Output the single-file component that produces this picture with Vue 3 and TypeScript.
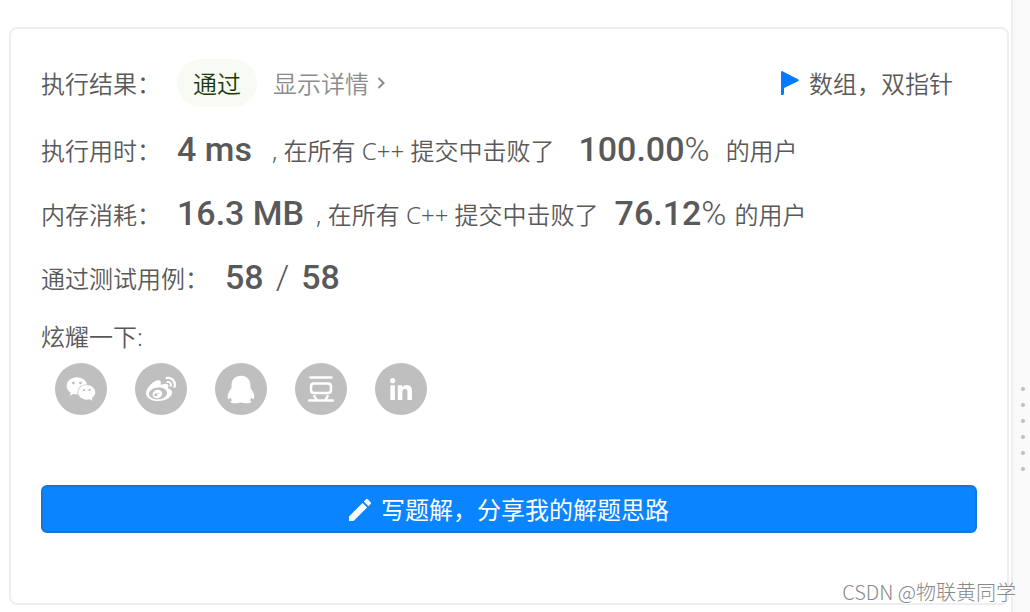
<script setup lang="ts">
interface Metric {
  label: string
  value: string
  percent: string
  spacing: 'loose' | 'tight'
}

interface Share {
  name: string
  viewBox: string
  path: string
  stroke?: boolean
  size: string
}

const metrics: Metric[] = [
  { label: '执行用时：', value: '4 ms', percent: '100.00', spacing: 'loose' },
  { label: '内存消耗：', value: '16.3 MB', percent: '76.12', spacing: 'tight' },
]

const shares: Share[] = [
  {
    name: '微信',
    viewBox: '0 0 576 512',
    size: 'mid',
    path: 'M385.2 167.6c6.4 0 12.6.3 18.8 1.1C387.4 90.3 303.3 32 207.7 32 100.5 32 13 104.8 13 197.4c0 53.4 29.3 97.5 77.9 131.6l-19.3 58.6 68-34.1c24.4 4.8 43.8 9.7 68.2 9.7 6.2 0 12.1-.3 18.3-.8-4-12.9-6.2-26.6-6.2-40.8-.1-84.9 72.9-154 165.3-154zm-104.5-52.9c14.5 0 24.2 9.7 24.2 24.4 0 14.5-9.7 24.2-24.2 24.2-14.8 0-29.3-9.7-29.3-24.2.1-14.7 14.6-24.4 29.3-24.4zm-136.4 48.6c-14.5 0-29.3-9.7-29.3-24.2 0-14.8 14.8-24.4 29.3-24.4 14.8 0 24.4 9.7 24.4 24.4 0 14.6-9.6 24.2-24.4 24.2zM563 319.4c0-77.9-77.9-141.3-165.4-141.3-92.7 0-165.4 63.4-165.4 141.3S305 460.7 397.6 460.7c19.3 0 38.9-5.1 58.6-9.9l53.4 29.3-14.8-48.6C534 402.1 563 363.2 563 319.4zm-219.1-24.5c-9.7 0-19.3-9.7-19.3-19.6 0-9.7 9.7-19.3 19.3-19.3 14.8 0 24.4 9.7 24.4 19.3 0 10-9.7 19.6-24.4 19.6zm107.1 0c-9.7 0-19.3-9.7-19.3-19.6 0-9.7 9.7-19.3 19.3-19.3 14.8 0 24.4 9.7 24.4 19.3.1 10-9.5 19.6-24.4 19.6z',
  },
  {
    name: '微博',
    viewBox: '0 -16 512 512',
    size: 'mid',
    path: 'M407 177.6c7.6-24-13.4-46.8-37.4-41.7-22 4.8-28.8-28.1-7.1-32.8 50.1-10.9 92.3 37.1 76.5 84.8-6.8 21.2-38.8 10.8-32-10.3zM214.8 446.7C108.5 446.7 0 395.3 0 310.4c0-44.3 28-95.4 76.3-143.7C176 67 279.5 65.8 249.9 161c-4 13.1 12.3 5.7 12.3 6 79.5-33.6 140.5-16.8 114 51.4-3.7 9.4 1.1 10.9 8.3 13.1 135.7 42.3 34.8 215.2-169.7 215.2zm143.7-146.3c-5.4-55.7-78.5-94-163.4-85.7-84.8 8.6-148.8 60.3-143.4 116s78.5 94 163.4 85.7c84.8-8.6 148.8-60.3 143.4-116zM347.9 35.1c-25.9 5.6-16.8 43.7 8.3 38.3 72.3-15.2 134.8 52.8 111.7 124-7.4 24.2 29.1 37 37.4 12 31.9-99.8-55.1-195.9-157.4-174.3zm-78.5 311c-17.1 38.8-66.8 60-109.1 46.3-40.8-13.1-58-53.4-40.3-89.7 17.7-35.4 63.1-55.4 103.4-45.1 42 10.8 63.1 50.2 46 88.5zm-86.3-30c-12.9-5.4-30 .3-38 12.9-8.3 12.9-4.3 28 8.6 34 13.1 6 30.8.3 39.1-12.9 8-13.1 3.7-28.3-9.7-34zm32.6-13.4c-5.1-1.7-11.4.6-14.3 5.4-2.9 5.1-1.4 10.6 3.7 12.9 5.1 2 11.7-.3 14.6-5.4 2.8-5.2 1.1-10.9-4-12.9z',
  },
  {
    name: 'QQ',
    viewBox: '0 0 52 52',
    size: 'full',
    path: 'M26 12.700c-5.700 0-9.500 4-9.500 9.300v3c-2.300 3-3.800 5.700-3.800 9 0 2 .9 2.600 1.900 1.400l1-1c.4 1.300 1 2.300 1.700 3.100-1.200.4-1.700.8-1.700 1.400 0 1.500 7.400 1.600 10.400.5 3 1.100 10.400 1 10.400-.5 0-.6-.5-1-1.700-1.400.7-.8 1.300-1.800 1.700-3.100l1 1c1 1.200 1.900.6 1.900-1.400 0-3.300-1.500-6-3.800-9v-3c0-5.300-3.800-9.300-9.500-9.300z',
  },
  {
    name: '豆瓣',
    viewBox: '0 0 52 52',
    size: 'full',
    stroke: true,
    path: 'M15.500 14.500h21M19 20.500h14q3 0 3 3v3.500q0 3-3 3H19q-3 0-3-3v-3.500q0-3 3-3zM19.300 33l2 3.500M32.700 33l-2 3.500M14 37.500h24',
  },
  {
    name: '领英',
    viewBox: '0 0 448 448',
    size: 'small',
    path: 'M100.28 448H7.4V148.9h92.88zM53.79 108.1C24.09 108.1 0 83.5 0 53.8a53.79 53.79 0 0 1 107.58 0c0 29.7-24.1 54.3-53.79 54.3zM447.9 448h-92.68V302.4c0-34.7-.7-79.2-48.29-79.2-48.29 0-55.69 37.7-55.69 76.7V448h-92.78V148.9h89.08v40.8h1.3c12.4-23.5 42.69-48.3 87.88-48.3 94 0 111.28 61.9 111.28 142.3V448z',
  },
]
</script>

<template>
  <div class="page">
    <main class="panel">
      <section class="card">
        <header class="row head">
          <span class="label">执行结果：</span>
          <span class="status">通过</span>
          <a class="detail" href="#">
            显示详情
            <svg class="chevron" viewBox="0 0 8 12" aria-hidden="true"><path d="M1.500 1l5 5-5 5" /></svg>
          </a>
          <span class="tags">
            <svg class="flag" viewBox="0 0 18 24" aria-hidden="true"><path d="M0 1.500Q0-.5 2 .4L17 8.200Q18.500 9.200 17 10.200L3 17V22.500Q3 24 1.500 24H0z" /></svg>
            <span>数组，双指针</span>
          </span>
        </header>

        <div v-for="m in metrics" :key="m.label" class="row metric" :class="m.spacing">
          <span class="label">{{ m.label }}</span>
          <strong class="number">{{ m.value }}</strong>
          <span class="note">, 在所有 C++ 提交中击败了</span>
          <span class="number"><strong>{{ m.percent }}</strong><span class="thin">%</span></span>
          <span class="tail">的用户</span>
        </div>

        <div class="row metric">
          <span class="label">通过测试用例：</span>
          <strong class="number">58<span class="thin slash">/</span>58</strong>
        </div>

        <div class="row brag">炫耀一下:</div>
        <div class="shares">
          <button v-for="s in shares" :key="s.name" class="share" type="button" :aria-label="s.name">
            <svg :class="[s.size, { line: s.stroke }]" :viewBox="s.viewBox" aria-hidden="true"><path :d="s.path" /></svg>
          </button>
        </div>

        <button class="write" type="button">
          <svg class="pen" viewBox="3 3 18 18" aria-hidden="true"><path d="M3 17.250V21h3.750L17.810 9.940l-3.750-3.750L3 17.250zM20.710 7.040a1 1 0 0 0 0-1.410l-2.340-2.340a1 1 0 0 0-1.410 0l-1.830 1.830 3.750 3.750 1.830-1.830z" /></svg>
          写题解，分享我的解题思路
        </button>
      </section>
    </main>
    <aside class="splitter" aria-hidden="true"><i v-for="n in 6" :key="n"></i></aside>
    <div class="watermark">CSDN @物联黄同学</div>
  </div>
</template>

<style>
body {
  background: #fff;
}
</style>

<style scoped>
.page {
  position: relative;
  display: flex;
  min-height: 100vh;
  box-sizing: border-box;
  color: #595959;
  font: 350 24px/32px "Noto Sans", "Noto Sans CJK SC", sans-serif;
  white-space: nowrap;
}
.panel {
  flex: 1;
  padding: 27px 2px 7px 9px;
}
.card {
  border: 2px solid #eee;
  border-radius: 8px;
  padding: 30px 30px 70px;
}
.row {
  display: flex;
  align-items: center;
}
.head {
  height: 48px;
  margin-bottom: 12px;
}
.head .label,
.detail,
.tags span {
  padding-top: 2px;
}
.label {
  margin-right: 16px;
}
.status {
  padding: 9px 16px 7px;
  border-radius: 24px;
  background: #f7fbf3;
  color: #1b3b0c;
}
.detail {
  display: flex;
  align-items: center;
  gap: 8px;
  margin-left: 16px;
  color: #8c8c8c;
  text-decoration: none;
}
.chevron {
  width: 8px;
  height: 12px;
  margin-bottom: 2px;
  fill: none;
  stroke: #8c8c8c;
  stroke-width: 2;
}
.tags {
  display: flex;
  align-items: center;
  gap: 10px;
  margin-left: auto;
  margin-right: 24px;
}
.flag {
  width: 18px;
  height: 24px;
  fill: #007aff;
}
.metric {
  height: 64px;
}
.number {
  padding-bottom: 4px;
  font: 500 34px/60px Roboto, sans-serif;
}
.number strong {
  font-weight: 500;
}
.number .thin {
  font-weight: 300;
}
.slash {
  margin: 0 12px;
}
.loose .note {
  margin: 0 24px 0 20px;
}
.loose .tail {
  margin-left: 16px;
}
.tight .note {
  margin: 0 16px 0 12px;
}
.tight .tail {
  margin-left: 8px;
}
.brag {
  height: 52px;
}
.shares {
  display: flex;
  gap: 28px;
  padding-left: 14px;
}
.share {
  display: flex;
  align-items: center;
  justify-content: center;
  width: 52px;
  height: 52px;
  padding: 0;
  border: 0;
  border-radius: 50%;
  background: #bfbfbf;
}
.share svg {
  fill: #fff;
}
.share .mid {
  width: 30px;
  height: 30px;
}
.share .full {
  width: 52px;
  height: 52px;
}
.share .small {
  width: 22px;
  height: 22px;
}
.share .line {
  fill: none;
  stroke: #fff;
  stroke-width: 2.5;
  stroke-linecap: round;
}
.write {
  display: flex;
  align-items: center;
  justify-content: center;
  gap: 10px;
  width: 100%;
  height: 48px;
  padding: 2px 0 0;
  margin-top: 70px;
  border: 2px solid #1675d6;
  border-radius: 6px;
  background: #0a84ff;
  color: #fff;
  font: inherit;
  font-weight: 400;
}
.pen {
  width: 22px;
  height: 22px;
  fill: #fff;
}
.splitter {
  display: flex;
  flex-direction: column;
  align-items: flex-end;
  gap: 12px;
  box-sizing: border-box;
  width: 19px;
  padding: 387px 5px 0 0;
  border-left: 2px solid #eee;
  background: #f9f9f9;
}
.splitter i {
  width: 4px;
  height: 4px;
  border-radius: 50%;
  background: #bfbfbf;
}
.watermark {
  position: absolute;
  right: 14px;
  bottom: 4px;
  color: #888;
  font: 300 20px/32px "Noto Sans CJK SC", sans-serif;
  text-shadow: 1px 1px 0 #fff;
}
</style>
